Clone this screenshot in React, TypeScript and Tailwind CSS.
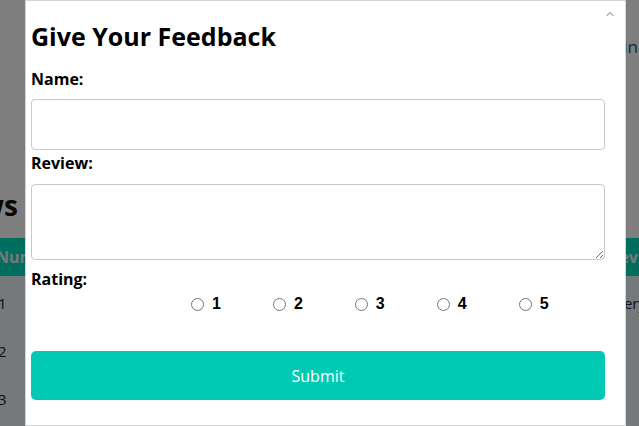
import { ChevronUp } from "lucide-react";

const ratings = [1, 2, 3, 4, 5];

const rows = ["1", "2", "3"];

export default function App() {
  return (
    <div className="relative h-[426px] w-full overflow-hidden bg-white font-['Open_Sans',sans-serif]">
      {/* Page behind the modal */}
      <div className="flex h-full flex-col">
        <div className="flex h-[96px] items-center justify-end pb-[2px] pr-[1px]">
          <span className="text-[17px] text-[#1a4f8a]">Login</span>
        </div>
        <div className="flex h-[142px] items-end pb-[14px]">
          <h2 className="ml-[-96px] text-[28px] font-bold leading-[38px] text-[#111]">Reviews</h2>
        </div>
        <div className="flex h-[38px] items-center justify-between bg-[#00dcbc] text-[16px] font-bold text-[#f0f0f0]">
          <span className="ml-[-4px]">Number</span>
          <span className="mr-[-27px]">Review</span>
        </div>
        <div className="flex flex-1 flex-col bg-[#ebf3f8] pt-[3px] text-[15px] text-[#222]">
          {rows.map((r) => (
            <div key={r} className="flex h-[48px] items-center justify-between">
              <span className="ml-[-2px]">{r}</span>
              {r === "1" && <span className="mr-[-7px]">very</span>}
            </div>
          ))}
        </div>
      </div>

      {/* Overlay + modal */}
      <div className="absolute inset-0 flex bg-black/50 pl-[25px]">
        <div className="relative flex h-full w-[601px] flex-col border border-[#d4d4d4] bg-white pl-[5px] pr-[20px] pt-[17px]">
          <ChevronUp className="absolute right-[9px] top-[7px] h-3 w-3 text-[#b0b0b0]" strokeWidth={2.5} />
          <h1 className="text-[25px] font-bold leading-[36px] text-black">Give Your Feedback</h1>
          <label className="mt-[13px] text-[16px] font-bold leading-[24px] text-black">Name:</label>
          <input className="mt-[8px] h-[51px] w-full rounded-[4px] border border-[#c8c8c8] outline-none" />
          <label className="mt-[1px] text-[16px] font-bold leading-[24px] text-black">Review:</label>
          <textarea className="mt-[9px] h-[76px] w-full resize-y rounded-[4px] border border-[#c8c8c8] outline-none" />
          <label className="mt-[7px] text-[16px] font-bold leading-[24px] text-black">Rating:</label>
          <div className="mt-[1px] flex items-center gap-[52px] pl-[160px] font-['Liberation_Sans',sans-serif]">
            {ratings.map((n) => (
              <label key={n} className="flex items-center gap-[8px] text-[16px] font-bold leading-[24px] text-black">
                <span className="h-[13px] w-[13px] rounded-full border border-[#767676] bg-white" />
                {n}
              </label>
            ))}
          </div>
          <button className="mt-[35px] h-[49px] w-full rounded-[5px] bg-[#00c9b4] text-[16px] text-white">
            Submit
          </button>
        </div>
      </div>
    </div>
  );
}
